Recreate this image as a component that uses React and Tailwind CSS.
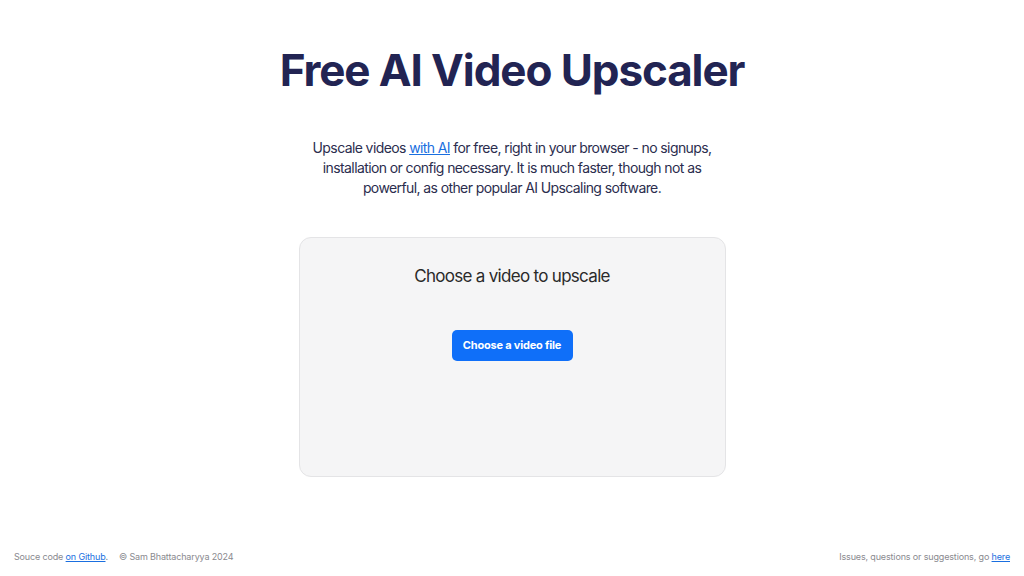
import React from "react";

export default function App() {
  return (
    <div className="min-h-screen flex flex-col bg-white font-['Inter',sans-serif]">
      <main className="flex-1 flex flex-col items-center">
        <h1 className="mt-[42px] text-[44px] leading-[56px] font-bold tracking-[-1.1px] text-[#222453]">
          Free AI Video Upscaler
        </h1>
        <p className="mt-[40px] w-[410px] text-center text-[14px] leading-[20px] tracking-[-0.6px] text-[#2b2d4e]">
          Upscale videos{" "}
          <a href="#" className="text-[#1a6fe0] underline">
            with AI
          </a>{" "}
          for free, right in your browser - no signups, installation or config
          necessary. It is much faster, though not as powerful, as other popular
          AI Upscaling software.
        </p>
        <div className="mt-[39px] w-[427px] h-[240px] rounded-[12px] border border-[#e4e4e6] bg-[#f5f5f6] flex flex-col items-center">
          <h2 className="mt-[26px] text-[17px] leading-[24px] tracking-[-0.7px] text-[#2a2a2a]">
            Choose a video to upscale
          </h2>
          <button
            type="button"
            className="mt-[42px] h-[31px] w-[121px] rounded-[5px] bg-[#0f6ff9] text-white text-[11px] tracking-[-0.2px] font-bold"
          >
            Choose a video file
          </button>
        </div>
      </main>
      <footer className="flex justify-between items-center px-[14px] pb-[13px] text-[9px] tracking-[-0.15px] text-[#8a8a8f]">
        <div className="flex gap-[11px]">
          <span>
            Souce code{" "}
            <a href="#" className="text-[#1a6fe0] underline">
              on Github
            </a>
            .
          </span>
          <span>© Sam Bhattacharyya 2024</span>
        </div>
        <span>
          Issues, questions or suggestions, go{" "}
          <a href="#" className="text-[#1a6fe0] underline">
            here
          </a>
        </span>
      </footer>
    </div>
  );
}
